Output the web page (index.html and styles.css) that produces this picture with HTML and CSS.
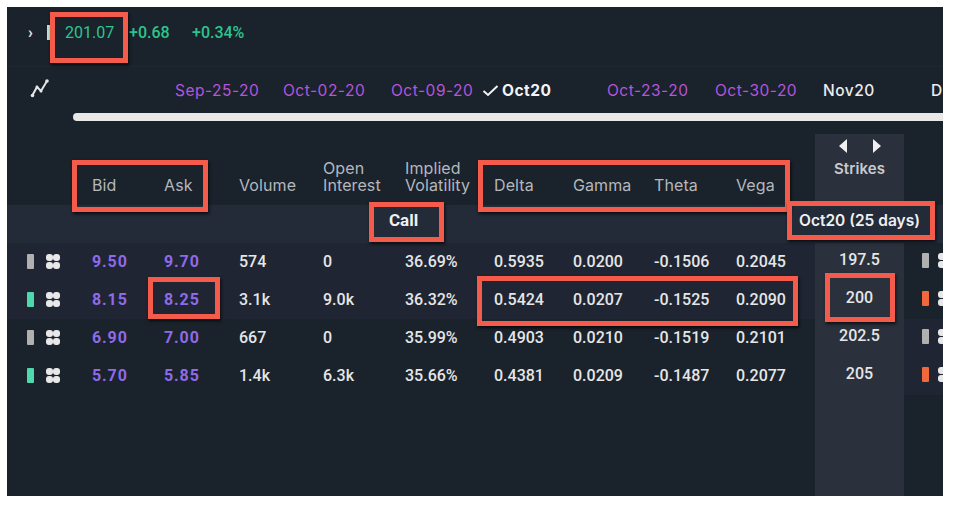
FILE: index.html
```html
<!DOCTYPE html>
<html lang="en">
<head>
<meta charset="utf-8">
<title>Option chain</title>
<link rel="stylesheet" href="styles.css">
</head>
<body>
<main class="app">
  <header class="quote">
    <span class="chev">›</span>
    <span class="quote-bar"></span>
    <span class="q-price">201.07</span>
    <span class="q-change">+0.68</span>
    <span class="q-pct">+0.34%</span>
  </header>
  <nav class="expiries">
    <svg class="chart-icon" width="20" height="20" viewBox="0 0 20 20"><path d="M2 18 L7 9 L11 13 L17 3" fill="none" stroke="#e6e6e6" stroke-width="2"/><circle cx="2.5" cy="17.5" r="1.8" fill="#e6e6e6"/><circle cx="7" cy="9" r="1.5" fill="#e6e6e6"/><circle cx="11" cy="13" r="1.5" fill="#e6e6e6"/><circle cx="17" cy="3" r="1.8" fill="#e6e6e6"/></svg>
    <div class="tabs">
      <span class="tab weekly">Sep-25-20</span>
      <span class="tab weekly">Oct-02-20</span>
      <span class="tab weekly">Oct-09-20</span>
      <span class="tab active"><svg class="check" width="17" height="13" viewBox="0 0 17 13"><path d="M1.5 7 L6 11 L15.5 2" fill="none" stroke="#f2f2f2" stroke-width="2"/></svg>Oct20</span>
      <span class="tab weekly">Oct-23-20</span>
      <span class="tab weekly">Oct-30-20</span>
      <span class="tab monthly">Nov20</span>
      <span class="tab monthly">Dec20</span>
    </div>
  </nav>
  <div class="slider"></div>

  <section class="chain">
    <div class="row head">
      <span></span>
      <span>Bid</span><span>Ask</span><span>Volume</span>
      <span>Open<br>Interest</span><span>Implied<br>Volatility</span>
      <span>Delta</span><span>Gamma</span><span>Theta</span><span>Vega</span>
      <div class="strike strike-head">
        <div class="arrows"><i class="arrow-l"></i><i class="arrow-r"></i></div>
        <span>Strikes</span>
      </div>
      <span></span>
    </div>
    <div class="row band">
      <span class="call">Call</span>
      <div class="strike band-exp"><span>Oct20 (25 days)</span></div>
      <span></span>
    </div>

    <div class="row data itm">
      <div class="marks"><i class="bar neutral"></i><i class="grip"><b></b><b></b><b></b><b></b></i></div>
      <span class="px">9.50</span><span class="px">9.70</span><span>574</span><span>0</span><span>36.69%</span>
      <span>0.5935</span><span>0.0200</span><span>-0.1506</span><span>0.2045</span>
      <div class="strike"><span>197.5</span></div>
      <div class="marks put"><i class="bar neutral"></i><i class="grip"><b></b><b></b><b></b><b></b></i></div>
    </div>
    <div class="row data itm">
      <div class="marks"><i class="bar up"></i><i class="grip"><b></b><b></b><b></b><b></b></i></div>
      <span class="px">8.15</span><span class="px">8.25</span><span>3.1k</span><span>9.0k</span><span>36.32%</span>
      <span>0.5424</span><span>0.0207</span><span>-0.1525</span><span>0.2090</span>
      <div class="strike"><span>200</span></div>
      <div class="marks put"><i class="bar down"></i><i class="grip"><b></b><b></b><b></b><b></b></i></div>
    </div>
    <div class="row data otm">
      <div class="marks"><i class="bar neutral"></i><i class="grip"><b></b><b></b><b></b><b></b></i></div>
      <span class="px">6.90</span><span class="px">7.00</span><span>667</span><span>0</span><span>35.99%</span>
      <span>0.4903</span><span>0.0210</span><span>-0.1519</span><span>0.2101</span>
      <div class="strike"><span>202.5</span></div>
      <div class="marks put"><i class="bar neutral"></i><i class="grip"><b></b><b></b><b></b><b></b></i></div>
    </div>
    <div class="row data otm">
      <div class="marks"><i class="bar up"></i><i class="grip"><b></b><b></b><b></b><b></b></i></div>
      <span class="px">5.70</span><span class="px">5.85</span><span>1.4k</span><span>6.3k</span><span>35.66%</span>
      <span>0.4381</span><span>0.0209</span><span>-0.1487</span><span>0.2077</span>
      <div class="strike"><span>205</span></div>
      <div class="marks put"><i class="bar down"></i><i class="grip"><b></b><b></b><b></b><b></b></i></div>
    </div>
    <div class="row filler"><div class="strike"></div><span></span></div>
  </section>

  <div class="mark mark-price"></div>
  <div class="mark mark-bidask"></div>
  <div class="mark mark-greeks"></div>
  <div class="mark mark-call"></div>
  <div class="mark mark-exp"></div>
  <div class="mark mark-ask"></div>
  <div class="mark mark-row"></div>
  <div class="mark mark-strike"></div>
</main>
</body>
</html>
```

FILE: styles.css
```css
* { box-sizing: border-box; }
html, body { margin: 0; background: #fff; }
body { height: 507px; overflow: hidden; padding: 7px 10px 0 7px; font-family: "Roboto", sans-serif; }

.app {
  position: relative;
  width: 936px;
  height: 489px;
  background: #1a222c;
  color: #e6e6e6;
  overflow: hidden;
  display: flex;
  flex-direction: column;
}

/* quote line */
.quote {
  height: 60px;
  flex: none;
  display: flex;
  align-items: center;
  padding: 0 0 8px 21px;
  border-bottom: 1px solid #1e2630;
  font-size: 16px;
  font-weight: 500;
  color: #2ec48e;
}
.chev { width: 19px; font-size: 16px; color: #e6e6e6; font-weight: 700; }
.quote-bar { width: 3px; height: 15px; background: #b4e6d4; margin-right: 15px; }
.q-price { width: 64px; font-weight: 400; }
.q-change { width: 63px; }

/* expiry tabs */
.expiries {
  height: 46px;
  flex: none;
  display: flex;
  align-items: center;
  padding-left: 23px;
  overflow: hidden;
}
.chart-icon { flex: none; margin: -4px 0 0 0; }
.tabs { display: flex; margin-left: 125px; flex: none; }
.tab {
  width: 108px;
  flex: none;
  font-family: "Inter", sans-serif;
  font-size: 15.5px;
  letter-spacing: 0.5px;
  white-space: nowrap;
  display: flex;
  align-items: center;
}
.weekly { color: #b455dc; }
.monthly { color: #ececec; font-weight: 500; }
.active { color: #f4f4f4; font-weight: 700; }
.check { flex: none; margin: 0 3px 0 -17px; }

.slider {
  height: 8px;
  flex: none;
  margin-left: 66px;
  background: #e8e8e8;
  border-radius: 4px 0 0 4px;
}

/* chain table */
.chain {
  flex: 1;
  min-height: 0;
  margin-top: 13px;
  display: flex;
  flex-direction: column;
}
.row {
  display: grid;
  grid-template-columns: 85px 72px 75px 84px 82px 89px 79px 81px 82px 79px 89px 39px;
  flex: none;
}
.head {
  height: 71px;
  align-items: end;
  font-family: "Inter", sans-serif;
  font-size: 16px;
  line-height: 17px;
  letter-spacing: 0.1px;
  color: #b4b8bc;
  padding-bottom: 11px;
  white-space: nowrap;
}
.head .strike-head {
  grid-column: 11;
  align-self: stretch;
  margin-bottom: -11px;
  flex-direction: column;
  justify-content: flex-start;
  padding-top: 5px;
  color: #c8cacc;
  font-weight: 600;
  font-size: 15px;
}
.arrows { display: flex; justify-content: space-between; width: 42px; height: 14px; margin-bottom: 7px; }
.arrow-l, .arrow-r { width: 0; height: 0; border-top: 7px solid transparent; border-bottom: 7px solid transparent; }
.arrow-l { border-right: 8px solid #f0f0f0; }
.arrow-r { border-left: 8px solid #f0f0f0; }

.strike {
  background: #2a303c;
  display: flex;
  justify-content: center;
  align-items: center;
  color: #e6e6e6;
  font-size: 16px;
  font-weight: 500;
  white-space: nowrap;
}

.band {
  height: 38px;
  background: #232a38;
  align-items: center;
}
.band > .call {
  grid-column: 5 / 6;
  margin-left: 66px;
  white-space: nowrap;
  font-weight: 700;
  font-size: 17px;
  color: #f0f0f0;
  margin-top: -8px;
}
.band-exp {
  grid-column: 11;
  align-self: stretch;
  padding-bottom: 8px;
  background: #232a38;
  font-family: "Inter", sans-serif;
  font-weight: 600;
  font-size: 15.5px;
  color: #f0f0f0;
}

.data {
  height: 38px;
  align-items: center;
  font-size: 16px;
  font-weight: 500;
  color: #e6e6e6;
}
.data > span { margin-top: -2px; }
.itm { background: #1f2532; }
.itm .put { background: #1a222c; }
.otm .put { background: #1f2532; }
.data .strike { align-self: stretch; padding-bottom: 6px; }
.data .put { align-self: stretch; }
.px { color: #8f6ae8; font-weight: 700; font-size: 16px; letter-spacing: 0.9px; }

.marks { display: flex; align-items: center; padding: 0 0 0 20px; height: 38px; margin-top: -2px; }
.marks.put { padding-left: 18px; overflow: hidden; margin-top: 0; padding-bottom: 4px; }
.bar { width: 7px; height: 15px; border-radius: 1px; flex: none; }
.neutral { background: #b0b0b0; }
.up { background: #4fd8ab; }
.down { background: #f0683c; }
.grip {
  display: grid;
  grid-template-columns: 7px 7px;
  gap: 1px 0;
  margin-left: 12px;
  flex: none;
}
.grip b { height: 7px; border-radius: 3px; background: #e8e8e8; }
.marks.put .grip { margin-left: 9px; }

.filler { flex: 1; }
.filler .strike { grid-column: 11; }

/* annotation frames over the screenshot */
.mark {
  position: absolute;
  border: 5px solid #f45b4b;
  box-shadow: 1px 2px 3px rgba(0, 0, 0, 0.7);
}
.mark-price  { left: 43px;  top: 5px;   width: 78px;  height: 51px; }
.mark-bidask { left: 65px;  top: 153px; width: 136px; height: 52px; }
.mark-greeks { left: 471px; top: 153px; width: 312px; height: 52px; }
.mark-call   { left: 362px; top: 195px; width: 75px;  height: 40px; }
.mark-exp    { left: 780px; top: 194px; width: 148px; height: 39px; }
.mark-ask    { left: 141px; top: 270px; width: 72px;  height: 42px; }
.mark-row    { left: 470px; top: 269px; width: 321px; height: 50px; }
.mark-strike { left: 818px; top: 266px; width: 70px;  height: 49px; }
```
